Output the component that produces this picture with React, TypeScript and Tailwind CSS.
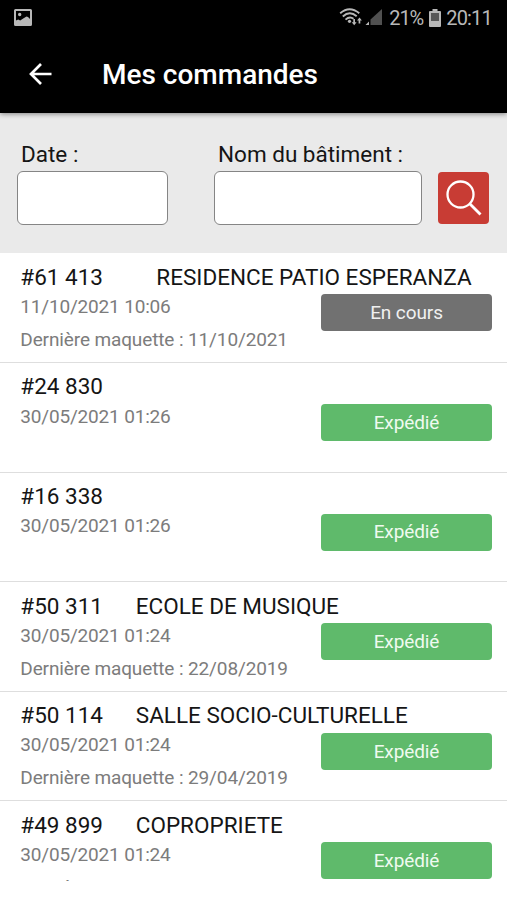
type Order = {
  id: string;
  date: string;
  name?: string;
  mockup?: string;
  pending?: boolean;
};

const orders: Order[] = [
  { id: "#61 413", date: "11/10/2021 10:06", name: "RESIDENCE PATIO ESPERANZA", mockup: "11/10/2021", pending: true },
  { id: "#24 830", date: "30/05/2021 01:26" },
  { id: "#16 338", date: "30/05/2021 01:26" },
  { id: "#50 311", date: "30/05/2021 01:24", name: "ECOLE DE MUSIQUE", mockup: "22/08/2019" },
  { id: "#50 114", date: "30/05/2021 01:24", name: "SALLE SOCIO-CULTURELLE", mockup: "29/04/2019" },
  { id: "#49 899", date: "30/05/2021 01:24", name: "COPROPRIETE", mockup: "29/04/2019" },
];

function StatusBar() {
  return (
    <div className="flex h-[36px] items-center justify-between pl-[14px] pr-[15px] text-[#b8b8b8]">
      <svg width="18" height="17" viewBox="0 0 18 17" className="-mt-[2px]">
        <path fill="currentColor" fillRule="evenodd" d="M1.500 0h15A1.500 1.500 0 0 1 18 1.500v14a1.500 1.500 0 0 1-1.500 1.500h-15A1.500 1.500 0 0 1 0 15.500v-14A1.500 1.500 0 0 1 1.500 0ZM2 2v9.500l2.200-1 2 1L10 9l2.500-1.500 1.500.5 2 2V2ZM4 5.500a1.700 1.700 0 1 0 3.400 0 1.700 1.700 0 1 0-3.400 0Z" />
      </svg>
      <div className="flex items-center">
        <svg width="44" height="20" viewBox="0 0 44 20" className="mr-[6px] -mt-[2px]">
          <g fill="none" stroke="currentColor" strokeWidth="1.900">
            <path d="M1.200 6.200Q10.500-1.800 20.300 6.200" />
            <path d="M3.800 9.500Q10.700 3.200 17.700 9.300" />
            <path d="M6.500 12.600Q10.700 8.800 14.500 11.800" />
          </g>
          <circle cx="10.500" cy="14.300" r="1.600" fill="currentColor" />
          <path fill="currentColor" d="M14.300 12h1.700v3.200h1.600L15.200 18.300l-2.500-3.100h1.600ZM20.500 10.500l2.400 3h-1.600v3h-1.700v-3H18Z" />
          <path fill="#505050" d="M43 2v16H31.500v-5.500Z" />
          <path fill="currentColor" d="M30 14.500v3.500H26.500Z" />
        </svg>
        <span className="text-[20px] leading-[24px] tracking-[-1.100px]">21%</span>
        <svg width="12" height="18" viewBox="0 0 12 18" className="ml-[6px] mr-[5px]">
          <path fill="currentColor" d="M3.500 0h5v2H11a1 1 0 0 1 1 1v14a1 1 0 0 1-1 1H1a1 1 0 0 1-1-1V3a1 1 0 0 1 1-1h2.500Z" />
          <path fill="#585858" d="M2 4h8v8H2Z" />
        </svg>
        <span className="text-[20px] leading-[24px] tracking-[-0.800px]">20:11</span>
      </div>
    </div>
  );
}

function Header() {
  return (
    <header className="relative z-10 h-[113px] shrink-0 bg-black text-white shadow-[0_1px_5px_rgba(0,0,0,0.45)]">
      <StatusBar />
      <div className="flex h-[77px] items-center pl-[29px]">
        <svg width="23" height="22" viewBox="0 0 23 22" fill="none" stroke="#fff" strokeWidth="2.700" className="-mt-[1px]">
          <path d="M22.500 11H2M12 1 2 11l10 10" />
        </svg>
        <h1 className="ml-[50px] whitespace-nowrap text-[28px] font-medium leading-[32px]">Mes commandes</h1>
      </div>
    </header>
  );
}

function Filters() {
  return (
    <section className="flex h-[140.400px] shrink-0 items-start bg-[#eaeaea] pl-[17px] pt-[28px] text-[22.500px] leading-[27px] text-[#151515]">
      <label className="block w-[151px]">
        <span className="block pl-[4px]">Date :</span>
        <input className="mt-[2.500px] block h-[54px] w-full rounded-[6px] border border-[#858585] bg-white" />
      </label>
      <label className="ml-[46px] block w-[208px]">
        <span className="block whitespace-nowrap pl-[4px]">Nom du bâtiment :</span>
        <input className="mt-[2.500px] block h-[54px] w-full rounded-[6px] border border-[#858585] bg-white" />
      </label>
      <button aria-label="Rechercher" className="ml-[16px] mt-[31px] flex h-[52px] w-[51px] items-center justify-center rounded-[4px] bg-[#c83c34]">
        <svg width="36" height="36" viewBox="0 0 36 36" fill="none" stroke="#fff" strokeWidth="2.300">
          <circle cx="14.500" cy="14.500" r="13" />
          <path strokeWidth="2.800" d="m23.500 23.500 11 11" />
        </svg>
      </button>
    </section>
  );
}

function OrderRow({ order }: { order: Order }) {
  return (
    <li className="flex h-[109.600px] flex-col border-b border-[#dedede] pl-[20.300px] pr-[15px] pt-[9.500px]">
      <div className="flex h-[28px] whitespace-nowrap text-[22.500px] leading-[28px] text-[#151515]">
        <span className={order.pending ? "w-[136px]" : "w-[115.500px]"}>{order.id}</span>
        {order.name && <span>{order.name}</span>}
      </div>
      <div className="flex items-start justify-between">
        <div className="whitespace-nowrap text-[19px] text-[#7c7c7c]">
          <p className="mt-[4.200px] h-[24px] leading-[24px] tracking-[-0.180px]">{order.date}</p>
          {order.mockup && <p className="mt-[8.800px] h-[24px] leading-[24px] tracking-[-0.120px]">Dernière maquette : {order.mockup}</p>}
        </div>
        <div className={`mt-[3.500px] flex h-[37px] w-[171px] items-center justify-center rounded-[4px] pt-[1px] text-[19px] tracking-[-0.100px] ${order.pending ? "bg-[#717171] text-[#f0f0f0]" : "bg-[#5fba6b] text-[#effaf0]"}`}>
          {order.pending ? "En cours" : "Expédié"}
        </div>
      </div>
    </li>
  );
}

export default function App() {
  return (
    <div className="flex h-[900px] w-[507px] flex-col overflow-hidden bg-white font-[Roboto,sans-serif]">
      <Header />
      <Filters />
      <ul className="h-[628px] shrink-0 overflow-hidden">
        {orders.map((order) => (
          <OrderRow key={order.id} order={order} />
        ))}
      </ul>
    </div>
  );
}
